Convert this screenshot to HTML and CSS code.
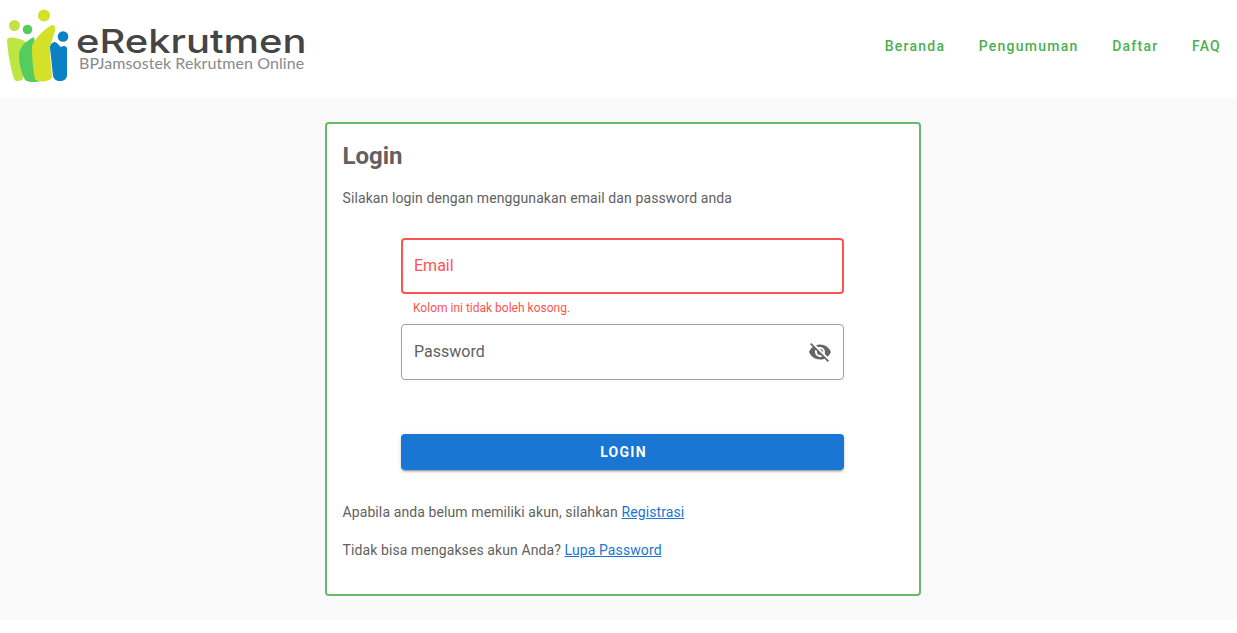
FILE: index.html
```html
<!DOCTYPE html>
<html lang="id">

<head>
    <meta charset="UTF-8">
    <meta name="viewport" content="width=device-width, initial-scale=1.0">
    <title>eRekrutmen</title>
    <link rel="stylesheet" href="styles.css">
</head>

<body>
    <!-- header -->
    <header class="topbar">
        <a class="brand" href="#">
            <svg class="brand-mark" width="70" height="82" viewBox="0 0 70 82">
                <circle cx="14.5" cy="25.500" r="5.500" fill="#c5e14a" />
                <circle cx="27.5" cy="29.500" r="4.800" fill="#55cc5e" />
                <circle cx="44" cy="15.500" r="6" fill="#d5e029" />
                <circle cx="63" cy="36.500" r="5.300" fill="#0a80c5" />
                <path d="M7 41C7 38 9 37 12 37.500C17 38 23 39 27 43L30 60L22 80C18 82 15 81 14 79C10 66 8 54 7 41Z" fill="#bde642" />
                <path d="M19 55C19 47 26 41 34 37L40 81C34 83 28 82 25 80C21 72 19 64 19 55Z" fill="#55cc5e" />
                <path d="M32 46C34 40 44 29 51 25.500C54 24 56 27 55 31C53 38 50 44 50 52C50 61 52 70 52 77C51 82 37 83 35 79C33 70 32 58 32 46Z" fill="#d5e029" />
                <path d="M50 48C50 44 53 42 55 42C58 43 59 46 61 47C64 45 67 46 67 49V75C67 79 64 81 60 81C56 81 54 79 53 76C52 66 51 57 50 48Z" fill="#0a80c5" />
            </svg>
            <div class="brand-text">
                <div class="brand-name">eRekrutmen</div>
                <div class="brand-sub">BPJamsostek Rekrutmen Online</div>
            </div>
        </a>
        <nav class="menu">
            <a href="#">Beranda</a>
            <a href="#">Pengumuman</a>
            <a href="#">Daftar</a>
            <a href="#">FAQ</a>
        </nav>
    </header>

    <!-- form login -->
    <main class="main">
        <div class="card">
            <h1 class="card-title">Login</h1>
            <p class="intro">Silakan login dengan menggunakan email dan password anda</p>

            <form class="form">
                <div class="field field-error">
                    <span class="field-label">Email</span>
                </div>
                <div class="field-message">Kolom ini tidak boleh kosong.</div>
                <div class="field">
                    <span class="field-label">Password</span>
                    <svg class="eye" width="24" height="24" viewBox="0 0 24 24">
                        <path fill="#666" d="M11.830 9L15 12.160V12a3 3 0 0 0-3-3h-.170m-4.300.800l1.550 1.550c-.050.210-.080.420-.080.650a3 3 0 0 0 3 3c.220 0 .440-.030.650-.080l1.550 1.550c-.670.330-1.410.530-2.200.530a5 5 0 0 1-5-5c0-.790.200-1.530.530-2.200M2 4.270l2.280 2.280.450.450C3.080 8.300 1.780 10 1 12c1.730 4.390 6 7.500 11 7.500 1.550 0 3.030-.300 4.380-.840l.430.420L19.730 22 21 20.730 3.270 3M12 7a5 5 0 0 1 5 5c0 .640-.130 1.260-.360 1.820l2.930 2.930c1.500-1.250 2.700-2.890 3.430-4.750-1.730-4.390-6-7.500-11-7.500-1.400 0-2.740.250-4 .700l2.170 2.150C10.740 7.130 11.350 7 12 7z" />
                    </svg>
                </div>
                <button class="btn-login" type="button">Login</button>
            </form>

            <p class="note">Apabila anda belum memiliki akun, silahkan <a href="#">Registrasi</a></p>
            <p class="note">Tidak bisa mengakses akun Anda? <a href="#">Lupa Password</a></p>
        </div>
    </main>
</body>

</html>
```

FILE: styles.css
```css
html,
body {
    margin: 0;
    background-color: #fff;
    font-family: Roboto, Arial, sans-serif;
    overflow: hidden;
}

.topbar {
    height: 98px;
    display: flex;
    justify-content: space-between;
    align-items: center;
    background-color: #fff;
}

.brand {
    display: flex;
    align-items: flex-start;
    text-decoration: none;
    height: 98px;
}

.brand-mark {
    display: block;
    flex-shrink: 0;
}

.brand-text {
    margin-top: 25px;
    margin-left: 6px;
}

/* the wordmark in the logo is wider than any installed font */
.brand-name {
    font-family: Inter, Arial, sans-serif;
    font-size: 33px;
    font-weight: 500;
    line-height: 32px;
    color: #454545;
    transform: scaleX(1.210);
    transform-origin: left center;
    white-space: nowrap;
}

.brand-sub {
    font-family: Lato, Arial, sans-serif;
    font-size: 16px;
    line-height: 14px;
    letter-spacing: 0.070px;
    color: #8a8a8a;
    margin-top: -1px;
    margin-left: 3px;
    white-space: nowrap;
}

.menu {
    display: flex;
    gap: 33.500px;
    padding-right: 16px;
    margin-top: -7px;
}

.menu a {
    font-size: 14px;
    font-weight: 500;
    letter-spacing: 1.250px;
    color: #4caf50;
    text-decoration: none;
}

.main {
    height: 522px;
    box-sizing: border-box;
    padding-top: 24px;
    padding-left: 8px;
    display: flex;
    justify-content: center;
    background-color: #fafafa;
}

.card {
    width: 596px;
    height: 474px;
    box-sizing: border-box;
    padding: 16px;
    background-color: #fff;
    border: 2px solid #66bb6a;
    border-radius: 4px;
}

.card-title {
    margin: 0;
    font-size: 24px;
    line-height: 32px;
    font-weight: 700;
    color: #665f5f;
}

.intro {
    margin: 16px 0 0;
    font-size: 14px;
    line-height: 20px;
    letter-spacing: 0.100px;
    color: #616161;
}

.form {
    width: 443px;
    margin: 30px auto 0;
}

.field {
    height: 56px;
    box-sizing: border-box;
    padding: 0 11px 2px 12px;
    display: flex;
    justify-content: space-between;
    align-items: center;
    border: 1px solid #9e9e9e;
    border-radius: 4px;
}

.field-label {
    font-size: 16px;
    color: #616161;
}

.field-error {
    border: 2px solid #ff5252;
    padding: 0 10px 2px 11px;
}

.field-error .field-label {
    color: #ff5252;
}

.field-message {
    height: 30px;
    padding: 6px 12px 0;
    box-sizing: border-box;
    font-size: 12px;
    line-height: 16px;
    color: #ff5252;
}

.eye {
    display: block;
    margin-top: 2px;
}

.btn-login {
    display: block;
    width: 100%;
    height: 36px;
    margin-top: 54px;
    padding: 0 0 0 2px;
    border: none;
    border-radius: 4px;
    background-color: #1976d2;
    color: #fff;
    font-family: Roboto, Arial, sans-serif;
    font-size: 14px;
    font-weight: 700;
    letter-spacing: 1.250px;
    text-transform: uppercase;
    box-shadow: 0 3px 1px -2px rgba(0, 0, 0, 0.2), 0 2px 2px 0 rgba(0, 0, 0, 0.14), 0 1px 5px 0 rgba(0, 0, 0, 0.12);
}

.note {
    margin: 0;
    font-size: 14px;
    line-height: 20px;
    letter-spacing: 0.100px;
    color: #616161;
}

.form + .note {
    margin-top: 32px;
}

.note + .note {
    margin-top: 18px;
}

.note a {
    color: #1976d2;
}
```
